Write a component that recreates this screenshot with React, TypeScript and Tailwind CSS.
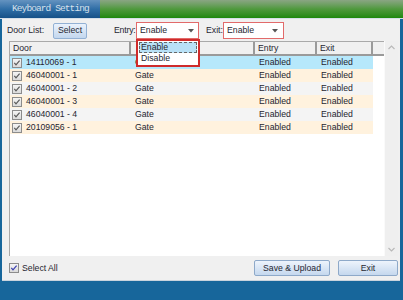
import React from "react";

function Check({ blue = false }: { blue?: boolean }) {
  return (
    <svg width="10" height="10" viewBox="0 0 10 10" className="shrink-0">
      <defs>
        <linearGradient id={blue ? "cbg2" : "cbg"} x1="0" y1="0" x2="0" y2="1">
          <stop offset="0" stopColor="#f6f6f6" />
          <stop offset="1" stopColor="#d9d9d9" />
        </linearGradient>
      </defs>
      <rect x="0.5" y="0.5" width="9" height="9" fill={`url(#${blue ? "cbg2" : "cbg"})`} stroke="#8c8c8c" />
      <path d="M2.3 4.8 L4 6.8 L7.6 2.6" fill="none" stroke={blue ? "#3b3fb0" : "#5a5a5a"} strokeWidth="1.2" />
    </svg>
  );
}

function Arrow() {
  return (
    <svg width="6" height="4" viewBox="0 0 6 4">
      <path d="M0 0 L6 0 L3 3.5 Z" fill="#555" />
    </svg>
  );
}

const rows = [
  { id: "14110069 - 1", bg: "bg-[#b6e8fb]" },
  { id: "46040001 - 1", bg: "bg-[#fff2de]" },
  { id: "46040001 - 2", bg: "bg-[#f4f4f4]" },
  { id: "46040001 - 3", bg: "bg-[#fff2de]" },
  { id: "46040001 - 4", bg: "bg-[#f4f4f4]" },
  { id: "20109056 - 1", bg: "bg-[#fff2de]" },
];

export default function App() {
  return (
    <div className="relative w-[403px] h-[300px] overflow-hidden bg-[#17669b] font-['Liberation_Sans',Arial,sans-serif] text-[8.7px] leading-none text-[#262630]">
      {/* title bar */}
      <div className="flex h-[18px]">
        <div className="w-[100px] bg-gradient-to-b from-[#6493c0] via-[#2f6ea6] to-[#165188] flex items-center pl-[12px]">
          <span className="font-['Liberation_Mono',monospace] text-[9.5px] tracking-[-0.9px] whitespace-nowrap text-[#d6e0ea]">
            Keyboard Setting
          </span>
        </div>
        <div className="flex-1 bg-gradient-to-b from-[#8aa583] via-[#4f993d] to-[#1d880b]" />
      </div>
      <div className="h-[1px] bg-[#d5dfe8]" />

      {/* body */}
      <div className="ml-[2px] mr-[3px] h-[262px] bg-[#f0f0f0] flex flex-col border-b border-[#c9d3dd]">
        {/* toolbar */}
        <div className="mt-[3px] h-[17px] flex items-center pl-[5px] whitespace-nowrap">
          <span className="w-[46px] shrink-0">Door List:</span>
          <button className="w-[34px] h-[16px] shrink-0 rounded-[2px] border border-[#93b1d4] bg-gradient-to-b from-[#eaf2fc] to-[#c3d7ee] text-[8.7px] text-[#262630]">
            Select
          </button>
          <span className="ml-[27px] w-[22px] shrink-0 tracking-[-0.2px]">Entry:</span>
          <div className="w-[63px] h-[17px] shrink-0 border border-[#e26a6a] bg-white flex items-center justify-between pl-[3px] pr-[4px]">
            <span>Enable</span>
            <Arrow />
          </div>
          <span className="ml-[7px] w-[17px] shrink-0">Exit:</span>
          <div className="w-[61px] h-[17px] shrink-0 border border-[#e26a6a] bg-white flex items-center justify-between pl-[3px] pr-[5px]">
            <span>Enable</span>
            <Arrow />
          </div>
        </div>

        {/* table */}
        <div className="mt-[2px] ml-[7px] mr-[2px] h-[215px] flex">
          <div className="flex-1 bg-white border-l border-t border-[#a9a9a9] flex flex-col">
            <div className="h-[14px] flex bg-[#f0f0f0] border-b-2 border-[#9a9a9a]">
              <div className="w-[121px] border-r-2 border-[#9a9a9a] flex items-center pl-[3px]">Door</div>
              <div className="w-[124px] border-r-2 border-[#9a9a9a]" />
              <div className="w-[62px] border-r-2 border-[#9a9a9a] flex items-center pl-[3px]">Entry</div>
              <div className="w-[56px] border-r-2 border-[#9a9a9a] flex items-center pl-[3px]">Exit</div>
              <div className="flex-1" />
            </div>
            {rows.map((r) => (
              <div key={r.id} className="h-[13px] flex">
                <div className={`w-[363px] flex ${r.bg}`}>
                  <div className="w-[121px] flex items-center pl-[2px] gap-[4px]">
                    <Check />
                    <span>{r.id}</span>
                  </div>
                  <div className="w-[124px] flex items-center pl-[4px]">Gate</div>
                  <div className="w-[62px] flex items-center pl-[4px]">Enabled</div>
                  <div className="w-[56px] flex items-center pl-[4px]">Enabled</div>
                </div>
              </div>
            ))}
          </div>
          <div className="w-[14px] bg-[#efefef] border-l border-[#fafafa] flex flex-col items-center justify-between py-[4px]">
            <svg width="7" height="5" viewBox="0 0 7 5">
              <path d="M0.5 4 L3.5 1 L6.5 4" fill="none" stroke="#b9b9b9" strokeWidth="1.2" />
            </svg>
            <svg width="7" height="5" viewBox="0 0 7 5">
              <path d="M0.5 1 L3.5 4 L6.5 1" fill="none" stroke="#b9b9b9" strokeWidth="1.2" />
            </svg>
          </div>
        </div>

        {/* bottom row */}
        <div className="mt-[4px] h-[16px] flex items-center pl-[7px] pr-[2px]">
          <Check blue />
          <span className="ml-[3px]">Select All</span>
          <div className="flex-1" />
          <button className="w-[76px] h-[16px] rounded-[2px] border border-[#8ea9c9] bg-gradient-to-b from-[#eef4fc] to-[#c5d8ee] text-[8.7px] text-[#262630]">
            Save &amp; Upload
          </button>
          <button className="ml-[8px] w-[60px] h-[16px] rounded-[2px] border border-[#8ea9c9] bg-gradient-to-b from-[#eef4fc] to-[#c5d8ee] text-[8.7px] text-[#262630]">
            Exit
          </button>
        </div>
      </div>

      {/* open dropdown */}
      <div className="absolute left-[136px] top-[39px] w-[64px] h-[28px] bg-white border-2 border-[#cf2b2b] flex flex-col p-[1px]">
        <div className="h-[11px] bg-[#b9e1f6] border border-dashed border-[#666] flex items-center pl-[1px]">Enable</div>
        <div className="h-[12px] flex items-center pl-[2px]">Disable</div>
      </div>
    </div>
  );
}
